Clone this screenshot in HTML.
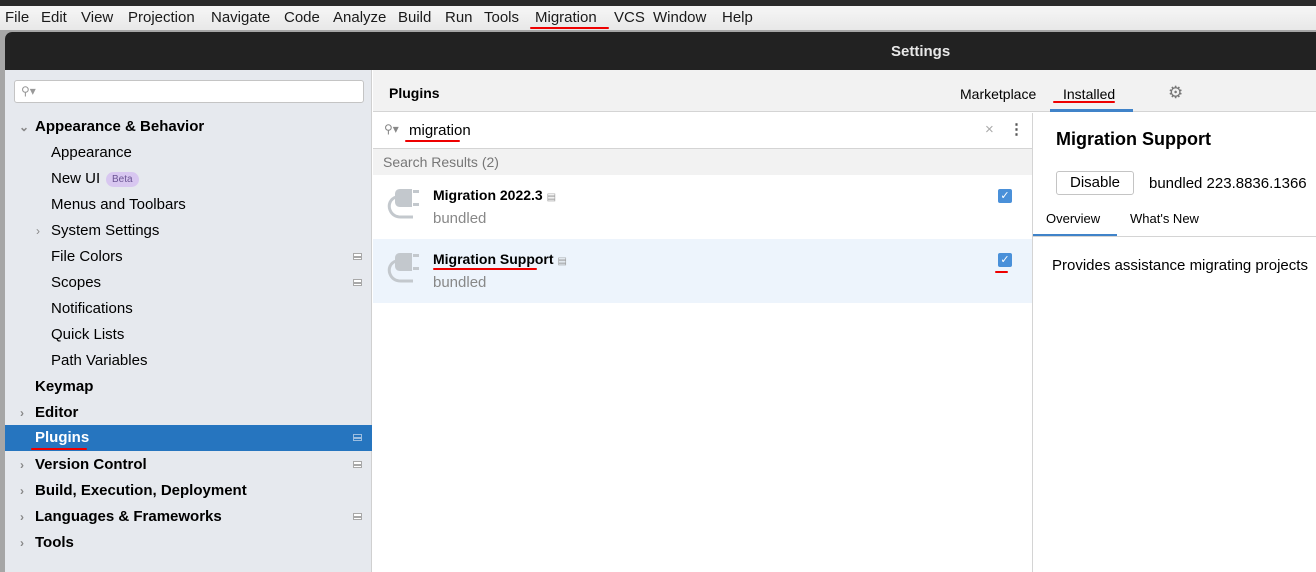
<!DOCTYPE html>
<html><head><meta charset="utf-8"><style>
*{margin:0;padding:0;box-sizing:border-box}
body{width:1316px;height:564px;overflow:hidden;position:relative;background:#a6a6a6;font-family:"Liberation Sans",sans-serif;font-size:14px;color:#000}
.a{position:absolute;white-space:nowrap}
#top{left:0;top:0;width:1316px;height:6px;background:#2b2b2b}
#menu{left:0;top:6px;width:1316px;height:24px;background:linear-gradient(#f6f6f6,#e8e8e8)}
#menu span{position:absolute;top:3px;font-size:15px;color:#1a1a1a}
#win{left:5px;top:32px;width:1320px;height:540px;background:#fff;border-radius:7px 0 0 0;overflow:hidden}
#title{left:0;top:0;width:100%;height:38px;background:#222}
#left{left:0;top:38px;width:367px;height:510px;background:#e6e9ee;border-right:1px solid #d0d0d0}
.row{position:absolute;left:0;width:367px;height:26px;line-height:26px;font-size:15px}
.b{font-weight:bold}
.chev{position:absolute;font-size:12px;color:#888}
.ic{position:absolute;right:10px;top:9px;width:9px;height:7px;border:1px solid #a8a8a8;background:linear-gradient(#fff 2px,#a8a8a8 2px,#a8a8a8 4px,#fff 4px)}
.ul{position:absolute;height:2px;background:#e00;border-radius:1px}
.cb{position:absolute;width:14px;height:14px;background:#4a90d9;border-radius:2px;color:#fff;font-size:11px;line-height:14px;text-align:center}
</style></head><body>
<div class="a" id="top"></div>
<div class="a" id="menu">
<span style="left:5px">File</span><span style="left:41px">Edit</span><span style="left:81px">View</span><span style="left:128px">Projection</span><span style="left:211px">Navigate</span><span style="left:284px">Code</span><span style="left:333px">Analyze</span><span style="left:398px">Build</span><span style="left:445px">Run</span><span style="left:484px">Tools</span><span style="left:535px">Migration</span><span style="left:614px">VCS</span><span style="left:653px">Window</span><span style="left:722px">Help</span>
</div>
<div class="ul" style="left:530px;top:27px;width:79px"></div>
<div class="a" id="win">
 <div class="a" id="title"></div>
 <div class="a b" style="left:886px;top:11px;color:#e8e8e8;font-size:15px">Settings</div>
 <div class="a" id="left">
  <div class="a" style="left:9px;top:10px;width:350px;height:23px;background:#fff;border:1px solid #c4c4c4;border-radius:3px;color:#999;font-size:12px;padding-left:6px;line-height:20px">&#9906;&#9662;</div>
  <div class="row b" style="top:44px"><span class="chev" style="left:14px">&#8964;</span><span style="position:absolute;left:30px">Appearance &amp; Behavior</span></div>
  <div class="row" style="top:70px"><span style="position:absolute;left:46px">Appearance</span></div>
  <div class="row" style="top:96px"><span style="position:absolute;left:46px">New UI</span><span style="position:absolute;left:101px;top:6px;height:15px;line-height:15px;padding:0 6px;background:#d8c7f0;color:#6b5594;font-size:10px;border-radius:8px">Beta</span></div>
  <div class="row" style="top:122px"><span style="position:absolute;left:46px">Menus and Toolbars</span></div>
  <div class="row" style="top:148px"><span class="chev" style="left:31px">&#8250;</span><span style="position:absolute;left:46px">System Settings</span></div>
  <div class="row" style="top:174px"><span style="position:absolute;left:46px">File Colors</span><i class="ic"></i></div>
  <div class="row" style="top:200px"><span style="position:absolute;left:46px">Scopes</span><i class="ic"></i></div>
  <div class="row" style="top:226px"><span style="position:absolute;left:46px">Notifications</span></div>
  <div class="row" style="top:252px"><span style="position:absolute;left:46px">Quick Lists</span></div>
  <div class="row" style="top:278px"><span style="position:absolute;left:46px">Path Variables</span></div>
  <div class="row b" style="top:304px"><span style="position:absolute;left:30px">Keymap</span></div>
  <div class="row b" style="top:330px"><span class="chev" style="left:15px">&#8250;</span><span style="position:absolute;left:30px">Editor</span></div>
  <div class="row b" style="top:355px;background:#2675bf;color:#fff"><span style="position:absolute;left:30px">Plugins</span><i class="ic" style="border-color:#9bbde0;background:linear-gradient(#2675bf 2px,#9bbde0 2px,#9bbde0 4px,#2675bf 4px)"></i></div>
  <div class="ul" style="left:26px;top:378px;width:56px"></div>
  <div class="row b" style="top:382px"><span class="chev" style="left:15px">&#8250;</span><span style="position:absolute;left:30px">Version Control</span><i class="ic"></i></div>
  <div class="row b" style="top:408px"><span class="chev" style="left:15px">&#8250;</span><span style="position:absolute;left:30px">Build, Execution, Deployment</span></div>
  <div class="row b" style="top:434px"><span class="chev" style="left:15px">&#8250;</span><span style="position:absolute;left:30px">Languages &amp; Frameworks</span><i class="ic"></i></div>
  <div class="row b" style="top:460px"><span class="chev" style="left:15px">&#8250;</span><span style="position:absolute;left:30px">Tools</span></div>
 </div>
 <!-- middle -->
 <div class="a" style="left:368px;top:38px;width:950px;height:42px;background:#f2f2f2;border-bottom:1px solid #d4d4d4"></div>
 <div class="a b" style="left:384px;top:53px">Plugins</div>
 <div class="a" style="left:955px;top:54px">Marketplace</div>
 <div class="a" style="left:1058px;top:54px">Installed</div>
 <div class="ul" style="left:1048px;top:69px;width:62px"></div>
 <div class="a" style="left:1045px;top:77px;width:83px;height:3px;background:#4083c9"></div>
 <div class="a" style="left:1163px;top:51px;color:#777;font-size:17px">&#9881;</div>
 <div class="a" style="left:368px;top:81px;width:659px;height:36px;background:#fff;border-bottom:1px solid #d4d4d4"></div>
 <div class="a" style="left:379px;top:90px;color:#888;font-size:12px">&#9906;&#9662;</div>
 <div class="a" style="left:404px;top:90px;font-size:15px">migration</div>
 <div class="ul" style="left:400px;top:108px;width:55px"></div>
 <div class="a" style="left:980px;top:89px;color:#aaa;font-size:15px">&#215;</div>
 <div class="a" style="left:1004px;top:88px;color:#555;font-size:15px;font-weight:bold">&#8942;</div>
 <div class="a" style="left:368px;top:117px;width:659px;height:26px;background:#f2f2f2;color:#777;padding-left:10px;line-height:26px">Search Results (2)</div>
 <div class="a" style="left:368px;top:207px;width:659px;height:64px;background:#edf4fc"></div>
 <svg class="a" style="left:378px;top:152px" width="44" height="44" viewBox="0 0 44 44"><g fill="#c3c8cd"><path d="M17 5h12v18H17c-3 0-5-2-5-5v-8c0-3 2-5 5-5z"/><rect x="30" y="6" width="6" height="3"/><rect x="30" y="19" width="6" height="3"/></g><path d="M13 13c-6 2-8 8-6 13s6 7 11 7h12" fill="none" stroke="#c3c8cd" stroke-width="3"/></svg>
 <svg class="a" style="left:378px;top:216px" width="44" height="44" viewBox="0 0 44 44"><g fill="#c3c8cd"><path d="M17 5h12v18H17c-3 0-5-2-5-5v-8c0-3 2-5 5-5z"/><rect x="30" y="6" width="6" height="3"/><rect x="30" y="19" width="6" height="3"/></g><path d="M13 13c-6 2-8 8-6 13s6 7 11 7h12" fill="none" stroke="#c3c8cd" stroke-width="3"/></svg>
 <div class="a b" style="left:428px;top:155px">Migration 2022.3 <span style="font-weight:normal;color:#999;font-size:10px">&#9636;</span></div>
 <div class="a" style="left:428px;top:178px;color:#888;font-size:15px">bundled</div>
 <div class="a b" style="left:428px;top:219px">Migration Support <span style="font-weight:normal;color:#999;font-size:10px">&#9636;</span></div>
 <div class="ul" style="left:428px;top:236px;width:104px"></div>
 <div class="a" style="left:428px;top:242px;color:#888;font-size:15px">bundled</div>
 <div class="cb" style="left:993px;top:157px">&#10003;</div>
 <div class="cb" style="left:993px;top:221px">&#10003;</div>
 <div class="ul" style="left:990px;top:239px;width:13px"></div>
 <div class="a" style="left:1027px;top:81px;width:1px;height:470px;background:#d4d4d4"></div>
 <!-- details -->
 <div class="a b" style="left:1051px;top:97px;font-size:18px">Migration Support</div>
 <div class="a" style="left:1051px;top:139px;width:78px;height:24px;border:1px solid #c4c4c4;border-radius:3px;text-align:center;line-height:22px;font-size:15px">Disable</div>
 <div class="a" style="left:1144px;top:143px;font-size:15px">bundled 223.8836.1366</div>
 <div class="a" style="left:1041px;top:179px;font-size:13px">Overview</div>
 <div class="a" style="left:1125px;top:179px;font-size:13px">What's New</div>
 <div class="a" style="left:1028px;top:202px;width:84px;height:3px;background:#4083c9"></div>
 <div class="a" style="left:1028px;top:204px;width:300px;height:1px;background:#d4d4d4"></div>
 <div class="a" style="left:1047px;top:225px;font-size:15px">Provides assistance migrating projects</div>
</div>
</body></html>
